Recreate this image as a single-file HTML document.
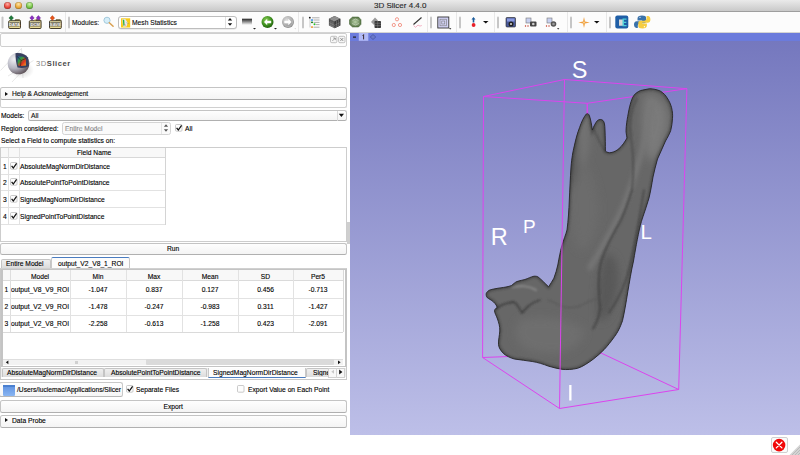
<!DOCTYPE html>
<html><head><meta charset="utf-8">
<style>
*{box-sizing:border-box;margin:0;padding:0}
html,body{width:800px;height:455px;overflow:hidden;background:#fff;font-family:"Liberation Sans",sans-serif;font-size:6.7px;color:#000;position:relative;-webkit-text-stroke:0.12px #000}
.a{position:absolute}
.t{position:absolute;white-space:nowrap;line-height:7px}
.tl{position:absolute;top:2.1px;width:7px;height:7px;border-radius:50%;box-shadow:inset 0 0 0 0.5px rgba(0,0,0,.25)}
.box{position:absolute;border:1px solid #cfcfcf;border-radius:2px;background:#fdfdfd}
.btn{position:absolute;border:1px solid #c4c4c4;border-bottom-color:#b0b0b0;border-radius:2.5px;background:linear-gradient(#fefefe,#f4f4f4)}
.tri{position:absolute;width:0;height:0;border-top:2.5px solid transparent;border-bottom:2.5px solid transparent;border-left:3.5px solid #111}
.hl{position:absolute;height:1px;background:#e2e2e2}
.vln{position:absolute;width:1px;background:#e2e2e2}
.cb{position:absolute;width:8px;height:8px;border:1px solid #b9b9b9;border-radius:1.5px;background:linear-gradient(#fff,#f0f0f0)}
.ck{position:absolute;left:0.5px;top:-2px;font-size:8px;line-height:8px;color:#111;font-family:"Liberation Sans"}
.num{position:absolute;font-size:6.7px;line-height:7px;white-space:nowrap}
.c{text-align:center}
.tab{position:absolute;border:1px solid #c4c4c4;border-bottom:none;background:linear-gradient(#efefef,#dcdcdc);border-radius:2px 2px 0 0}
</style></head><body>
<!-- title bar -->
<div class="a" style="left:0;top:0;width:800px;height:12px;background:linear-gradient(#eaeaea,#c9c9c9);border-bottom:1px solid #9e9e9e">
 <div class="tl" style="left:3.8px;background:radial-gradient(circle at 50% 30%,#ffb0a8,#e8463a 55%,#a82018)"></div>
 <div class="tl" style="left:14.9px;background:radial-gradient(circle at 50% 30%,#ffe6a8,#eaa93a 55%,#b27412)"></div>
 <div class="tl" style="left:25.9px;background:radial-gradient(circle at 50% 30%,#d0f4b0,#78c448 55%,#3f8a1c)"></div>
 <div class="t" style="left:374px;top:2px;font-size:8px;line-height:8px;color:#333">3D Slicer 4.4.0</div>
</div>
<!-- toolbar bg -->
<div class="a" style="left:0;top:12px;width:800px;height:21px;background:#fcfcfc;border-bottom:1px solid #d4d4d4"></div>
<svg class="a" style="left:0;top:0" width="800" height="33" viewBox="0 0 800 33">
 <defs>
  <linearGradient id="fold" x1="0" y1="0" x2="0" y2="1"><stop offset="0" stop-color="#efe6b0"/><stop offset="1" stop-color="#c9b86e"/></linearGradient>
  <linearGradient id="lay" x1="0" y1="0" x2="0" y2="1"><stop offset="0" stop-color="#222"/><stop offset="1" stop-color="#fff"/></linearGradient>
  <radialGradient id="grn" cx="0.4" cy="0.35" r="0.7"><stop offset="0" stop-color="#8fd05a"/><stop offset="0.6" stop-color="#3d8f1e"/><stop offset="1" stop-color="#1f5a0c"/></radialGradient>
  <radialGradient id="gry" cx="0.4" cy="0.35" r="0.7"><stop offset="0" stop-color="#e0e0e0"/><stop offset="0.6" stop-color="#a9a9a9"/><stop offset="1" stop-color="#8a8a8a"/></radialGradient>
  <radialGradient id="oct" cx="0.5" cy="0.5" r="0.6"><stop offset="0" stop-color="#b8d0a8"/><stop offset="1" stop-color="#4c6a3a"/></radialGradient>
 </defs>
 <!-- handles -->
 <g fill="#c6c6c6">
  <rect x="1.5" y="16.5" width="2" height="12" rx="1"/>
  <rect x="68" y="16.5" width="2" height="12" rx="1"/>
  <rect x="302" y="16.5" width="2" height="12" rx="1"/>
  <rect x="430" y="16.5" width="2" height="12" rx="1"/>
  <rect x="459" y="16.5" width="2" height="12" rx="1"/>
  <rect x="497" y="16.5" width="2" height="12" rx="1"/>
  <rect x="570" y="16.5" width="2" height="12" rx="1"/>
  <rect x="609" y="16.5" width="2" height="12" rx="1"/>
 </g>
 <g fill="#e8e8e8">
  <rect x="65" y="12" width="1" height="20"/>
  <rect x="298" y="12" width="1" height="20"/>
  <rect x="427" y="12" width="1" height="20"/>
  <rect x="456" y="12" width="1" height="20"/>
  <rect x="494" y="12" width="1" height="20"/>
  <rect x="567" y="12" width="1" height="20"/>
  <rect x="606" y="12" width="1" height="20"/>
 </g>
 <!-- folder icons -->
 <g id="f1">
  <path d="M15.3 19.6h4.2l.9.9v.6h-5.1z" fill="#e8d888" stroke="#3a3220" stroke-width="0.6"/>
  <rect x="8.7" y="20.7" width="11.8" height="7.8" rx="1" fill="url(#fold)" stroke="#30291a" stroke-width="0.9"/>
  <rect x="9.6" y="22" width="10" height="4.6" fill="#7e7a66"/>
  <rect x="9.6" y="26.9" width="10" height="0.9" fill="#f0e4a0"/>
 </g>
 <text x="14.6" y="25.9" font-size="4.2" font-family="Liberation Sans" font-weight="bold" fill="#f2f2f2" stroke="none" text-anchor="middle" style="-webkit-text-stroke:0">DATA</text>
 <path d="M11.2 15.6l2.3 2.4-2.3 2.4-2.3-2.4z" fill="#1f7a3a" stroke="#0d4a20" stroke-width="0.4"/>
 <use href="#f1" x="20.6"/>
 <text x="35.2" y="25.9" font-size="4.2" font-family="Liberation Sans" font-weight="bold" fill="#f2f2f2" text-anchor="middle" style="-webkit-text-stroke:0">DCM</text>
 <path d="M32 15.6l2.2 2.3-2.2 2.3-2.2-2.3z M38.4 15.6l2.2 2.3-2.2 2.3-2.2-2.3z" fill="#8a2ec0" stroke="#5a1880" stroke-width="0.4"/>
 <path d="M35 19.4v1.5" stroke="#c8a040" stroke-width="1"/>
 <use href="#f1" x="40.8"/>
 <text x="55.4" y="25.9" font-size="4.2" font-family="Liberation Sans" font-weight="bold" fill="#e4e4e4" text-anchor="middle" style="-webkit-text-stroke:0">SAVE</text>
 <path d="M52.4 15.6l2.2 2.4-2.2 2.4-2.2-2.4z" fill="#e8541a" stroke="#a03000" stroke-width="0.4"/>
 <!-- magnifier -->
 <circle cx="107" cy="20.3" r="3.1" fill="#d6eef8" stroke="#9cc4d8" stroke-width="0.9"/>
 <path d="M109.3 22.7l3.8 3.6" stroke="#d9a050" stroke-width="1.5" stroke-linecap="round"/>
 <!-- layout icon -->
 <rect x="242" y="18.7" width="10" height="6.3" fill="url(#lay)"/>
 <path d="M253 28h3l-1.5 1.5z" fill="#222"/>
 <!-- back arrow -->
 <circle cx="267.5" cy="22" r="6" fill="url(#grn)"/>
 <path d="M264 22l3.2-3.2v2h4v2.4h-4v2z" fill="#fff"/>
 <path d="M274 28h3l-1.5 1.5z" fill="#222"/>
 <!-- forward arrow -->
 <circle cx="288" cy="22" r="6" fill="url(#gry)"/>
 <circle cx="288" cy="22" r="4.6" fill="none" stroke="#c9c9c9" stroke-width="0.5"/>
 <path d="M291.5 22l-3.2-3.2v2h-4v2.4h4v2z" fill="#fff"/>
 <path d="M294.5 28.5h1.5l-.75.8z" fill="#aaa"/>
 <!-- module list -->
 <g>
  <circle cx="309.8" cy="17.7" r="0.9" fill="#111"/>
  <rect x="311" y="19.3" width="2" height="1.5" fill="#3a8ee8"/>
  <rect x="311" y="21.6" width="2" height="1.5" fill="#2a8a2a"/>
  <circle cx="314.5" cy="24.2" r="1" fill="#2ac02a"/>
  <rect x="311" y="26.3" width="2" height="1.6" fill="#f0a040"/>
  <path d="M310 18.5v9" stroke="#999" stroke-width="0.5"/>
  <g stroke="#8c8c8c" stroke-width="0.7"><path d="M312 17.8h7.5M313.5 20h6M313.5 22.4h6M315.8 24.6h3.7M313.5 27.2h6"/></g>
 </g>
 <!-- cube -->
 <path d="M334.5 16l5.8 2.8v6.6l-5.8 2.8-5.6-2.8v-6.6z" fill="#555"/>
 <path d="M334.5 16l5.8 2.8-5.8 2.8-5.6-2.8z" fill="#8a8a8a"/>
 <path d="M334.5 21.6v6.6l5.8-2.8v-6.6z" fill="#3c3c3c"/>
 <g stroke="#aaa" stroke-width="0.35" fill="none"><path d="M331 19.9l5.8-2.8M333 20.9l5.5-2.8M330.9 20.8v5.6M332.9 21.7v5.6M336.5 20.8v5.6M338.4 19.9v5.6M328.9 22.5l5.6 2.8 5.8-2.8M328.9 24.6l5.6 2.8 5.8-2.8"/></g>
 <!-- green octagon -->
 <path d="M352.5 17h6l2.5 2.7v4.6l-2.5 2.7h-6l-3-2.7v-4.6z" fill="url(#oct)" stroke="#3b5a2b" stroke-width="0.5"/>
 <path d="M352.5 20.5l3 -1.5 3 1.5M352 23.5l3.5 1.5 3.5-1.5" stroke="#dfe8d8" stroke-width="0.5" fill="none"/>
 <!-- stack -->
 <path d="M371 22l4-4.5 3 3-4 4.5z" fill="#9a9a9a"/>
 <rect x="374.5" y="21" width="6.5" height="7" rx="0.8" fill="#3a3a3a"/>
 <g stroke="#999" stroke-width="0.4"><path d="M374.5 23.3h6.5M374.5 25.6h6.5M377.7 21v7"/></g>
 <!-- red dots -->
 <g fill="none" stroke="#f08070" stroke-width="0.8">
  <circle cx="397" cy="19.3" r="1.6"/><circle cx="393.8" cy="25" r="1.6"/><circle cx="400" cy="25" r="1.6"/>
 </g>
 <!-- ruler -->
 <path d="M413.5 24.5l8-7" stroke="#333" stroke-width="1.1"/>
 <path d="M413.5 25.5l2 1.8 2.5-2.2 2 1 1.8-.6" stroke="#f080a0" stroke-width="0.6" fill="none"/>
 <!-- layout box -->
 <rect x="437.8" y="17" width="11" height="11" fill="#d2d2f6" stroke="#333" stroke-width="0.9"/>
 <rect x="440" y="19.2" width="6.6" height="6.6" fill="none" stroke="#777" stroke-width="0.6"/>
 <rect x="441.8" y="21" width="3" height="3" fill="none" stroke="#777" stroke-width="0.6"/>
 <path d="M449 28.2h2.4l-1.2 1.3z" fill="#111"/>
 <!-- arrow+dot -->
 <path d="M473.5 17l2 2.6h-1.2v3h-1.6v-3h-1.2z" fill="#1a5a9a"/>
 <circle cx="473.6" cy="25" r="1.9" fill="#e8202a"/>
 <path d="M483 21h5.5l-2.75 2.5z" fill="#111"/>
 <!-- camera -->
 <rect x="506" y="17.5" width="9.5" height="9.5" rx="1" fill="#4a5a9a" stroke="#222" stroke-width="0.6"/>
 <rect x="507" y="18.5" width="7.5" height="3" fill="#8a9ae0"/>
 <circle cx="511" cy="24" r="2.5" fill="#222"/><circle cx="511" cy="24" r="1" fill="#ddd"/>
 <!-- scene icon -->
 <rect x="526" y="18" width="5" height="5" fill="#c8d0f0" stroke="#777" stroke-width="0.6"/>
 <rect x="530" y="21.5" width="6.5" height="5" rx="1" fill="#444"/><circle cx="533.3" cy="24" r="1.3" fill="#ccc"/>
 <circle cx="525.5" cy="26" r="0.7" fill="#c03020"/><circle cx="528" cy="26" r="0.7" fill="#c03020"/>
 <!-- scene icon 2 -->
 <rect x="547" y="18" width="5" height="5" fill="#c8d0f0" stroke="#777" stroke-width="0.6"/>
 <circle cx="553.5" cy="24" r="2.8" fill="#555"/><circle cx="553.5" cy="24" r="1.3" fill="#999"/>
 <circle cx="546.5" cy="26" r="0.7" fill="#c03020"/><circle cx="549" cy="26" r="0.7" fill="#c03020"/>
 <path d="M557 28.3h2.4l-1.2 1.3z" fill="#111"/>
 <!-- crosshair -->
 <path d="M584 17l1 4.5 4.8 1-4.8 1-1 4.5-1-4.5-4.8-1 4.8-1z" fill="#f0a040"/>
 <circle cx="584" cy="22.5" r="1" fill="#f8d090"/>
 <path d="M594 21h5.5l-2.75 2.5z" fill="#111"/>
 <!-- E icon -->
 <rect x="615.3" y="15.5" width="13" height="13" rx="2" fill="#1f5ea6"/>
 <path d="M619 19.5h4l1.2 1.5-1.2 1.6 1.2 1.6-1.2 1.5h-4z" fill="#d8d8d8"/>
 <path d="M622.5 18.5h4v1.3h-2.6v2h2.4v1.2h-2.4v2h2.6v1.3h-4z" fill="#4ed0d8"/>
 <!-- python -->
 <path d="M642 15.5c-3 0-4.5 1-4.5 3v2h4.7v.8h-5.5c-1.8 0-2.7 1.3-2.7 3.3s.9 3.3 2.4 3.3h1.4v-2.2c0-1.4 1.2-2.5 2.5-2.5h3.8c1 0 2-1 2-2v-3.7c0-1.3-1.5-2-4.1-2z" fill="#3a72aa"/>
 <path d="M642.4 28.5c3 0 4.5-1 4.5-3v-2h-4.7v-.8h5.5c1.8 0 2.7-1.3 2.7-3.3s-.9-3.3-2.4-3.3h-1.4v2.2c0 1.4-1.2 2.5-2.5 2.5h-3.8c-1 0-2 1-2 2v3.7c0 1.3 1.5 2 4.1 2z" fill="#f6cd42"/>
 <circle cx="640" cy="17.3" r="0.6" fill="#fff"/><circle cx="644.4" cy="26.7" r="0.6" fill="#fff"/>
</svg>
<!-- module combo -->
<div class="t" style="left:72px;top:19px;color:#222">Modules:</div>
<div class="a" style="left:118px;top:15.5px;width:119px;height:13px;border:1px solid #bdbdbd;border-radius:3px;background:#fff;box-shadow:0 0.5px 0.5px rgba(0,0,0,.12)"></div>
<svg class="a" style="left:121px;top:17.5px" width="10" height="10" viewBox="0 0 10 10">
 <rect x="0" y="0.3" width="9.2" height="9.2" fill="#f8cc18"/>
 <path d="M1.2 1.3L4.3 1.1 6.6 4.5 5.6 8.6 2.2 8.7z" fill="#e6e8f0"/>
 <path d="M1.8 1.8L3.2 1.8 3.6 7.5 2.4 7.8z" fill="#2ab040"/>
 <path d="M3.6 6.5l1.2 0.8" stroke="#e04030" stroke-width="0.6"/>
 <path d="M5.4 4.6l2.8 1.2" stroke="#a09060" stroke-width="0.5"/>
</svg>
<div class="t" style="left:132px;top:19px;color:#111">Mesh Statistics</div>
<div class="a" style="left:224.5px;top:16.5px;width:1px;height:11px;background:#e0e0e0"></div>
<svg class="a" style="left:227px;top:17px" width="6" height="10"><path d="M0.8 3.6L3 1 5.2 3.6z M0.8 6.2L3 8.8 5.2 6.2z" fill="#111"/></svg>

<!-- top empty box -->
<div class="box" style="left:0;top:33px;width:347px;height:14px"></div>
<!-- float/close buttons -->
<svg class="a" style="left:329px;top:35px" width="18" height="9" viewBox="329 35 18 9">
 <rect x="330.5" y="36.3" width="6.4" height="6.4" rx="1.3" fill="#f6f6f6" stroke="#a8a8a8" stroke-width="0.7"/>
 <path d="M332.3 41l3-3M333.2 38h2.1v2.1" stroke="#666" stroke-width="0.55" fill="none"/>
 <rect x="338.6" y="36.3" width="6.4" height="6.4" rx="1.3" fill="#f6f6f6" stroke="#a8a8a8" stroke-width="0.7"/>
 <path d="M340.3 38l3 3M343.3 38l-3 3" stroke="#555" stroke-width="0.6"/>
</svg>

<!-- logo -->
<svg class="a" style="left:0;top:44px" width="40" height="40" viewBox="0 44 40 40">
 <defs>
  <radialGradient id="sph" cx="0.3" cy="0.3" r="0.85"><stop offset="0" stop-color="#f2f2f6"/><stop offset="0.5" stop-color="#b4b4c0"/><stop offset="0.85" stop-color="#6a6068"/><stop offset="1" stop-color="#4a3c3c"/></radialGradient>
  <linearGradient id="core" x1="0" y1="0" x2="1" y2="1"><stop offset="0" stop-color="#2040a0"/><stop offset="0.35" stop-color="#30a040"/><stop offset="0.65" stop-color="#e03020"/><stop offset="1" stop-color="#f0a020"/></linearGradient>
  <radialGradient id="shd" cx="0.5" cy="0.5" r="0.5"><stop offset="0" stop-color="#000" stop-opacity="0.18"/><stop offset="1" stop-color="#000" stop-opacity="0"/></radialGradient>
 </defs>
 <g stroke="#d0d0d0" stroke-width="0.5" fill="none"><path d="M0.5 70.5L21.5 48.5 23 78M8 76L33.5 60.5M12 82L30 63"/></g>
 <ellipse cx="22" cy="70" rx="12" ry="9" fill="url(#shd)"/>
 <circle cx="18.5" cy="63.5" r="10.8" fill="url(#sph)"/>
 <path d="M15.5 53.2C20 52.5 25 54 28 57.5L29 66C26 68 22 68.5 17.5 67.5C16 63 15.5 58 15.5 53.2z" fill="#384060"/>
 <path d="M17.3 56.5C20 56 23.5 56.5 25.8 58.5L26 65.5C23 66 20 66 17.8 65.5z" fill="url(#core)"/>
 <path d="M17.3 56.5L21 60.5 25.8 58.5M21 60.5L20.5 66" stroke="#111" stroke-width="0.5" fill="none"/>
</svg>
<div class="t" style="left:36px;top:60px;font-size:7.6px;line-height:8px;letter-spacing:0.55px;color:#8a8a8a;-webkit-text-stroke:0">3D<span style="color:#4a4a4a;font-weight:bold">Slicer</span></div>

<!-- help bar -->
<div class="a" style="left:0;top:99px;width:346.5px;height:9px;border:1px solid #d0d0d0;border-top:none;border-radius:0 0 2.5px 2.5px"></div>
<div class="btn" style="left:0;top:87.3px;width:346.5px;height:12.7px;border-bottom:1.3px solid #aaa"></div>
<div class="tri" style="left:4.5px;top:91.5px"></div>
<div class="t" style="left:12px;top:90.2px;color:#111">Help &amp; Acknowledgement</div>
<!-- section top line -->


<!-- models row -->
<div class="t" style="left:1px;top:111.5px">Models:</div>
<div class="btn" style="left:28px;top:110px;width:318.5px;height:11px"></div>
<div class="t" style="left:31px;top:111.5px;color:#111">All</div>
<div class="a" style="left:336.7px;top:110.5px;width:1.2px;height:10px;background:#d8d8d8"></div>
<svg class="a" style="left:337px;top:112px" width="8" height="6" viewBox="337 112 8 6"><path d="M338.8 113.7h5.2l-2.6 3.2z" fill="#111"/></svg>

<!-- region row -->
<div class="t" style="left:1px;top:124.5px">Region considered:</div>
<div class="a" style="left:62px;top:121.5px;width:109px;height:13px;border:1px solid #d4d4d4;border-radius:2.5px;background:#fafafa"></div>
<div class="t" style="left:65px;top:125px;color:#b8b8b8">Entire Model</div>
<div class="a" style="left:160.5px;top:122.5px;width:1px;height:11px;background:#e4e4e4"></div>
<svg class="a" style="left:163px;top:123px" width="6" height="10"><path d="M0.9 3.7L3 1.3 5.1 3.7z M0.9 6.3L3 8.7 5.1 6.3z" fill="#555"/></svg>
<svg class="a" style="left:174.5px;top:124px" width="8" height="8"><rect x=".5" y=".5" width="6.5" height="6.7" rx="1" fill="#fdfdfd" stroke="#bcbcbc" stroke-width=".8"/><path d="M1.6 3.9l1.7 2.1 3.3-4.6" stroke="#111" stroke-width="1.25" fill="none"/></svg>
<div class="t" style="left:185px;top:124.5px">All</div>

<div class="t" style="left:1px;top:137px">Select a Field to compute statistics on:</div>

<!-- field table frame -->
<div class="a" style="left:0;top:146.5px;width:347px;height:95px;border:1px solid #cdcdcd;background:#fff"></div>
<div class="a" style="left:1px;top:147.5px;width:164px;height:10.5px;background:#f8f8f8;border-bottom:1px solid #d8d8d8"></div>
<div class="vln" style="left:8px;top:147.5px;height:77px"></div>
<div class="vln" style="left:19px;top:147.5px;height:77px"></div>
<div class="vln" style="left:164.5px;top:147.5px;height:77px;background:#d4d4d4"></div>
<div class="hl" style="left:1px;top:173.5px;width:164px"></div>
<div class="hl" style="left:1px;top:190px;width:164px"></div>
<div class="hl" style="left:1px;top:207px;width:164px"></div>
<div class="hl" style="left:1px;top:224px;width:164px"></div>

<div class="t" style="left:77px;top:148.5px">Field Name</div>
<div class="t" style="left:3px;top:162.5px">1</div>
<div class="t" style="left:3px;top:179px">2</div>
<div class="t" style="left:3px;top:195.5px">3</div>
<div class="t" style="left:3px;top:212.5px">4</div>
<svg class="a" style="left:10px;top:161.5px" width="8" height="8"><rect x=".5" y=".5" width="6.5" height="6.7" rx="1" fill="#fdfdfd" stroke="#bcbcbc" stroke-width=".8"/><path d="M1.6 3.9l1.7 2.1 3.3-4.6" stroke="#111" stroke-width="1.25" fill="none"/></svg>
<svg class="a" style="left:10px;top:178px" width="8" height="8"><rect x=".5" y=".5" width="6.5" height="6.7" rx="1" fill="#fdfdfd" stroke="#bcbcbc" stroke-width=".8"/><path d="M1.6 3.9l1.7 2.1 3.3-4.6" stroke="#111" stroke-width="1.25" fill="none"/></svg>
<svg class="a" style="left:10px;top:194.5px" width="8" height="8"><rect x=".5" y=".5" width="6.5" height="6.7" rx="1" fill="#fdfdfd" stroke="#bcbcbc" stroke-width=".8"/><path d="M1.6 3.9l1.7 2.1 3.3-4.6" stroke="#111" stroke-width="1.25" fill="none"/></svg>
<svg class="a" style="left:10px;top:211.5px" width="8" height="8"><rect x=".5" y=".5" width="6.5" height="6.7" rx="1" fill="#fdfdfd" stroke="#bcbcbc" stroke-width=".8"/><path d="M1.6 3.9l1.7 2.1 3.3-4.6" stroke="#111" stroke-width="1.25" fill="none"/></svg>
<div class="t" style="left:20px;top:162.5px">AbsoluteMagNormDirDistance</div>
<div class="t" style="left:20px;top:179px">AbsolutePointToPointDistance</div>
<div class="t" style="left:20px;top:195.5px">SignedMagNormDirDistance</div>
<div class="t" style="left:20px;top:212.5px">SignedPointToPointDistance</div>
<div class="a" style="left:347px;top:222px;width:2.5px;height:22px;background:#cfcfcf"></div>

<!-- Run button -->
<div class="btn" style="left:0;top:242.5px;width:347px;height:12.5px"></div>
<div class="t" style="left:167px;top:244.7px">Run</div>
<!-- 3D view -->
<svg class="a" style="left:350px;top:33px" width="450" height="402" viewBox="350 33 450 402">
 <defs>
  <linearGradient id="vbg" x1="0" y1="41" x2="0" y2="435" gradientUnits="userSpaceOnUse"><stop offset="0" stop-color="#7578be"/><stop offset="1" stop-color="#bdbfe8"/></linearGradient>
  <linearGradient id="bone" x1="0" y1="0" x2="1" y2="0"><stop offset="0" stop-color="#4a4a4a"/><stop offset="0.3" stop-color="#6a6a6a"/><stop offset="0.7" stop-color="#6c6c6c"/><stop offset="1" stop-color="#505050"/></linearGradient>
 </defs>
 <rect x="350" y="41" width="450" height="394" fill="url(#vbg)"/>
 <rect x="350" y="33" width="450" height="8" fill="#6b7bdc"/>
 <rect x="358.8" y="33" width="9.5" height="7.8" fill="#b2baf6"/>
 <rect x="353" y="36.5" width="3" height="1.2" fill="#222"/>
 <path d="M363.6 34.6v4.8M362.6 35.6l1-1" stroke="#2a1a1a" stroke-width="0.9"/>
 <path d="M373 34.5l2.8 2.5-2.8 2.5-2.8-2.5z" fill="#6a78c8" stroke="#3a4a9a" stroke-width="0.6"/>
 <!-- back box lines (behind mandible) -->
 <g stroke="#dc44ee" stroke-width="1" fill="none">
  <path d="M483.5 96.5L564.5 79.5L686.9 88.7M483.5 96.5L587.2 103.3L686.9 88.7M483.5 96.5L482.6 357.5M686.9 88.7L678.7 389.5M587.2 103.3L601 353M482.6 357.5L601 353L678.7 389.5"/>
 </g>
 <!-- mandible -->
 <defs>
  <path id="mand" d="M633.8 95.4C637 92 640 90.3 642.6 90.1L649.6 88.7C653 88.8 657 89.6 660.2 91C663.5 93 665.8 95.5 667.2 98C669.2 101 670.8 104.5 671.6 107.7C672.5 111.5 672.8 115 672.5 118.3C672.2 122.8 671.8 126.6 670.7 130.6C669.5 134 667.5 137.5 665.5 141C663 147 660 153 657.5 159C655.8 165 654.3 171 653 177C651.8 184 650.5 192 649 198C646 208 643.5 215 641.4 221.4C638.5 232 636 246 633.5 261C631 272 629.5 282 627.8 291.7C626 303 624.5 312 622.5 320.7C620 328 617.5 332.5 614.6 336.5C611 341.5 607.5 346 604 349.7C600.5 353.2 597 356.3 593.5 359C588 363 583 366.5 577.6 368.3C572 369.6 567 369.8 561.8 369.3C557 368.6 553 367.3 548.6 366.2C543 364 538 362.5 532.8 361.6C527 360.5 520 360 514.3 359C510 357.8 506.5 356 503.7 353.7C500.5 350.5 498.7 347.5 498.5 344.4C498.3 340 499.5 335.5 499.8 331C500 326 498.5 322 497.5 319C496.5 316 494.5 313 494.5 310.5C495 308.5 497 307.8 497.2 307.2C496 304 494 302.3 491.9 300.6C489.5 299 487 298 486.6 296.7C486 295 486 293.7 486.6 292.7C488 290.5 490 289.8 491.9 289.4C496 288.4 500 288 503.7 287.4C507 286.9 509.5 286.3 511.7 285.4C513.5 284 515 282.3 517 281.5C520 280.5 522.5 280.2 524.9 279.5C528 278.5 531 276.8 534 276.2C535.5 276 537 276.3 538 276.9C541.5 279.5 545 283.5 548.6 286.8C550.5 284 552.3 281 553.9 278.2C555.5 274 556.8 269.5 557.8 265C559 258 560.5 251 561.5 247C563.5 240 566 234 567 230C568.3 220 568.9 210 569.3 200C569.8 190 570.3 178 571 167C571.8 158 572.8 152 574.3 146C575.8 139 577.6 132.6 579.6 127.5C581.5 122 583.7 117 586.4 113.9C587.5 113 588.5 113.5 589.5 116C590.8 120 591.5 124 592.3 130C593.5 127 595.5 122.5 597.5 120.5C599 119.3 601.5 119 603 120.5C604.5 122 604.8 125 605 130C605.3 138 605.4 145 605.4 151C607 152.5 609 153 611 152.6C614 152 617 150.5 619 148.6C622 146 624.8 142 627 138C626.5 135 626 132.5 626 130.6C626.3 125 627 120 627.7 116.5C628.5 112 629.3 107.5 630.3 104.2C631.3 100.5 632.5 97.5 633.8 95.4Z"/>
  <clipPath id="mclip"><use href="#mand"/></clipPath>
  <filter id="bl2" x="-20%" y="-20%" width="140%" height="140%"><feGaussianBlur stdDeviation="2"/></filter>
  <filter id="bl1" x="-20%" y="-20%" width="140%" height="140%"><feGaussianBlur stdDeviation="1"/></filter>
  <filter id="bl4" x="-20%" y="-20%" width="140%" height="140%"><feGaussianBlur stdDeviation="4"/></filter>
 </defs>
 <use href="#mand" fill="#676767"/>
 <g clip-path="url(#mclip)">
  <g filter="url(#bl4)">
   <path d="M570 160C578 150 592 165 598 200C600 230 592 250 580 250C570 240 568 200 570 160Z" fill="#6c6c6c"/>
   <path d="M645 95C658 92 670 105 668 125C664 145 655 165 648 160C642 140 640 115 645 95Z" fill="#7a7a7a"/>
   <path d="M520 320C540 315 570 318 585 330C580 350 560 358 530 350C515 345 512 330 520 320Z" fill="#6e6e6e"/>
   <path d="M575 105C585 100 592 120 588 150C584 170 578 170 576 150Z" fill="#747474"/>
   <path d="M575 120C580 140 578 170 572 190C566 170 566 140 575 120Z" fill="#555"/>
   <path d="M605 255C612 250 620 262 618 285C614 310 605 325 598 320C596 300 598 270 605 255Z" fill="#585858"/>
  </g>
  <g filter="url(#bl2)" fill="none" stroke-linecap="round">
   <path d="M652 105C646 140 636 175 624 205C612 232 600 250 590 268" stroke="#777" stroke-width="5"/>
   <path d="M652 205C646 240 638 275 626 310" stroke="#727272" stroke-width="4"/>
  </g>
  <g filter="url(#bl1)" fill="none" stroke-linecap="round">
   <path d="M632 190C629 200 625 212 620 222C612 236 605 248 601 262C598 275 598 290 600 307C600 315 597 322 593 329" stroke="#3c3c3c" stroke-width="1.4"/>
   <path d="M644 190C640 215 636 240 630 265C626 285 618 300 609 313" stroke="#474747" stroke-width="1.6"/>
   <path d="M591.5 124C596 135 601 145 605 151" stroke="#3a3a3a" stroke-width="1"/>
   <path d="M637 98C631 110 629 125 631 138C633 150 634 170 632 190" stroke="#454545" stroke-width="1.3"/>
   <path d="M495.8 309C500 305 506 303 514 302C518 305 520 310 522 313C526 308 530 303 540 300" stroke="#333" stroke-width="1.3"/>
   <path d="M548 300C556 303 562 307 567 307.5C573 308 578 307 582 305C588 302 592 300 596 299" stroke="#555" stroke-width="1"/>
   <path d="M512 287C520 286 528 285 536 290" stroke="#858585" stroke-width="2.2"/>
  </g>
  <use href="#mand" fill="none" stroke="#2e2e2e" stroke-width="3.2" filter="url(#bl1)" opacity="0.5"/>
 </g>
 <use href="#mand" fill="none" stroke="#262626" stroke-width="0.9"/>
 <!-- front box lines -->
 <g stroke="#dc44ee" stroke-width="1" fill="none">
  <path d="M564.5 79.5L559.5 408.5M482.6 357.5L559.5 408.5L678.7 389.5M587.2 103.3L587 113.5"/>
 </g>
 <!-- labels -->
 <g fill="#fff" font-family="Liberation Sans" style="-webkit-text-stroke:0">
  <text x="571.8" y="77.6" font-size="23.5">S</text>
  <text x="490.8" y="244.8" font-size="23.5">R</text>
  <text x="523" y="232.8" font-size="19">P</text>
  <text x="640.6" y="238.8" font-size="20.5">L</text>
 </g>
 <rect x="569.2" y="385" width="2.3" height="15.5" fill="#fff"/>
</svg>
<!-- tabs -->
<div class="tab" style="left:0.5px;top:258.5px;width:50px;height:9.5px"></div>
<div class="t" style="left:6px;top:259.8px">Entire Model</div>
<div class="a" style="left:51px;top:256.5px;width:79px;height:12px;border:1px solid #c8c8c8;border-top:1.5px solid #4a7cc0;border-bottom:none;background:#fcfcfc;border-radius:2px 2px 0 0"></div>
<div class="t" style="left:58px;top:259.5px">output_V2_V8_1_ROI</div>
<!-- tab pane frame -->
<div class="a" style="left:0;top:267.5px;width:347px;height:112px;border:1px solid #c8c8c8;border-top-color:#d0d0d0;background:#fff"></div>
<!-- inner table frame -->
<div class="a" style="left:0.5px;top:268.5px;width:346px;height:98px;border:1.5px solid #c4c4c4;border-left-width:2.5px;border-right-width:2px;background:#fff"></div>
<div class="a" style="left:3px;top:270px;width:340px;height:11px;background:#f8f8f8;border-bottom:1px solid #dadada"></div>
<div class="vln" style="left:10px;top:270px;height:62px;background:#dedede"></div>
<div class="vln" style="left:69.5px;top:270px;height:62px"></div>
<div class="vln" style="left:125.5px;top:270px;height:62px"></div>
<div class="vln" style="left:181.5px;top:270px;height:62px"></div>
<div class="vln" style="left:237.5px;top:270px;height:62px"></div>
<div class="vln" style="left:293px;top:270px;height:62px"></div>
<div class="vln" style="left:343px;top:270px;height:62px;background:#d8d8d8"></div>
<div class="hl" style="left:3px;top:297.5px;width:340px"></div>
<div class="hl" style="left:3px;top:315px;width:340px"></div>
<div class="hl" style="left:3px;top:331.5px;width:340px;background:#dadada"></div>

<div class="t c" style="left:10px;top:272.5px;width:60px">Model</div>
<div class="t c" style="left:70px;top:272.5px;width:56px">Min</div>
<div class="t c" style="left:126px;top:272.5px;width:56px">Max</div>
<div class="t c" style="left:182px;top:272.5px;width:56px">Mean</div>
<div class="t c" style="left:238px;top:272.5px;width:55px">SD</div>
<div class="t c" style="left:293px;top:272.5px;width:50px">Per5</div>
<div class="t" style="left:4.5px;top:286px">1</div>
<div class="t" style="left:4.5px;top:303px">2</div>
<div class="t" style="left:4.5px;top:320px">3</div>
<div class="t" style="left:11px;top:286px;width:58.5px;overflow:hidden;line-height:8px;height:8px">output_V8_V9_ROI</div>
<div class="t" style="left:11px;top:303px;width:58.5px;overflow:hidden;line-height:8px;height:8px">output_V2_V9_ROI</div>
<div class="t" style="left:11px;top:320px;width:58.5px;overflow:hidden;line-height:8px;height:8px">output_V2_V8_ROI</div>
<div class="t c" style="left:70px;top:286px;width:56px">-1.047</div>
<div class="t c" style="left:126px;top:286px;width:56px">0.837</div>
<div class="t c" style="left:182px;top:286px;width:56px">0.127</div>
<div class="t c" style="left:238px;top:286px;width:55px">0.456</div>
<div class="t c" style="left:293px;top:286px;width:50px">-0.713</div>
<div class="t c" style="left:70px;top:303px;width:56px">-1.478</div>
<div class="t c" style="left:126px;top:303px;width:56px">-0.247</div>
<div class="t c" style="left:182px;top:303px;width:56px">-0.983</div>
<div class="t c" style="left:238px;top:303px;width:55px">0.311</div>
<div class="t c" style="left:293px;top:303px;width:50px">-1.427</div>
<div class="t c" style="left:70px;top:320px;width:56px">-2.258</div>
<div class="t c" style="left:126px;top:320px;width:56px">-0.613</div>
<div class="t c" style="left:182px;top:320px;width:56px">-1.258</div>
<div class="t c" style="left:238px;top:320px;width:55px">0.423</div>
<div class="t c" style="left:293px;top:320px;width:50px">-2.091</div>
<!-- h scrollbar -->
<div class="a" style="left:3px;top:358.5px;width:340px;height:6.5px;background:#f2f2f2;border-top:1px solid #dedede"></div>
<div class="a" style="left:146px;top:359px;width:188px;height:6px;background:#dadada;border-radius:1px"></div>
<div class="a" style="left:75px;top:360.5px;width:3px;height:3px;background:#d0d0d0"></div>
<svg class="a" style="left:3px;top:359px" width="8" height="7" viewBox="3 359 8 7"><path d="M8.4 360.4v3.8l-2.6-1.9z" fill="#111"/></svg>
<svg class="a" style="left:336px;top:359px" width="7" height="7" viewBox="336 359 7 7"><path d="M338 360.4v3.8l2.6-1.9z" fill="#111"/></svg>
<!-- bottom tabs -->
<div class="a" style="left:1px;top:367.5px;width:345px;height:9.5px;background:#ececec"></div>
<div class="tab" style="left:1.5px;top:367.5px;width:102px;height:9.5px;border-bottom:none"></div>
<div class="t" style="left:7px;top:368.7px">AbsoluteMagNormDirDistance</div>
<div class="tab" style="left:104px;top:367.5px;width:103px;height:9.5px"></div>
<div class="t" style="left:111px;top:368.7px">AbsolutePointToPointDistance</div>
<div class="a" style="left:207.5px;top:367.5px;width:98px;height:10px;border:1px solid #c8c8c8;border-top:none;border-bottom:1.5px solid #4a7cc0;background:#fcfcfc"></div>
<div class="t" style="left:213px;top:368.7px">SignedMagNormDirDistance</div>
<div class="tab" style="left:306px;top:367.5px;width:24px;height:9.5px;overflow:hidden"></div>
<div class="t" style="left:313px;top:368.7px;width:14.7px;overflow:hidden">Signe</div>
<div class="a" style="left:328px;top:367.5px;width:17px;height:10px;background:#f8f8f8;border:1px solid #d0d0d0"></div>
<div class="a" style="left:336.3px;top:367.5px;width:1px;height:10px;background:#d4d4d4"></div>
<svg class="a" style="left:328px;top:367px" width="18" height="10" viewBox="328 367 18 10"><path d="M334 369.8v4l-2.7-2z" fill="#c8c8c8"/><path d="M339.2 369.5v5l3.2-2.5z" fill="#111"/></svg>

<!-- export row -->
<div class="a" style="left:-1px;top:382px;width:123.5px;height:14.8px;border:1px solid #c8c8c8;border-bottom-color:#b8b8b8;border-radius:2.5px;background:linear-gradient(#fefefe,#f6f6f6)"></div>
<div class="a" style="left:3px;top:385px;width:12px;height:10.5px;border-radius:1px;background:linear-gradient(#5c90e0,#8ab6f2)"></div>
<div class="a" style="left:3px;top:385px;width:12px;height:1.5px;background:#4a80d0"></div>
<div class="t" style="left:17px;top:386px">/Users/luciemac/Applications/Slicer</div>
<svg class="a" style="left:125.5px;top:384.5px" width="8" height="8"><rect x=".5" y=".5" width="6.5" height="6.7" rx="1" fill="#fdfdfd" stroke="#bcbcbc" stroke-width=".8"/><path d="M1.6 3.9l1.7 2.1 3.3-4.6" stroke="#111" stroke-width="1.25" fill="none"/></svg>
<div class="t" style="left:136px;top:386px">Separate Files</div>
<svg class="a" style="left:237px;top:384.5px" width="8" height="8"><rect x=".5" y=".5" width="6.5" height="6.7" rx="1" fill="#fdfdfd" stroke="#bcbcbc" stroke-width=".8"/></svg>
<div class="t" style="left:248px;top:386px">Export Value on Each Point</div>

<div class="btn" style="left:0;top:400px;width:347px;height:12.5px"></div>
<div class="t" style="left:163.5px;top:402.5px">Export</div>

<div class="btn" style="left:0;top:415px;width:347px;height:12.5px"></div>
<div class="tri" style="left:4.5px;top:417.8px"></div>
<div class="t" style="left:12px;top:417px">Data Probe</div>

<!-- status bar x -->
<div class="a" style="left:771px;top:437.3px;width:17px;height:15.7px;border:1px solid #d0d0d0;border-radius:2px;background:#fafafa"></div>
<svg class="a" style="left:770px;top:436px" width="30" height="19" viewBox="770 436 30 19">
 <circle cx="779.1" cy="445.1" r="6.3" fill="#f20808"/>
 <path d="M776.3 442.3l5.6 5.6M781.9 442.3l-5.6 5.6" stroke="#fff" stroke-width="1.3" stroke-linecap="round"/>
 <path d="M789.5 455L800 444.5V455z" fill="#d4d4d4"/>
 <path d="M792 455L800 447M795 455L800 450M798 455L800 453" stroke="#a8a8a8" stroke-width="0.6"/>
</svg>
</body></html>
